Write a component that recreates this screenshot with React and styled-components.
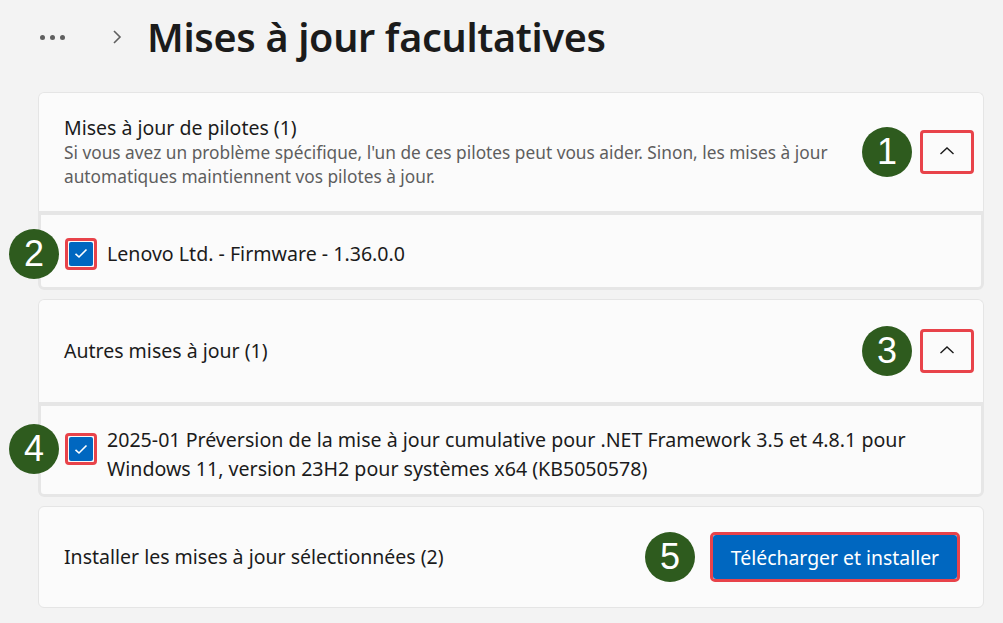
import React from "react";
import styled, { createGlobalStyle } from "styled-components";

const GlobalStyle = createGlobalStyle`
  body {
    margin: 0;
    background: #f3f3f3;
    font-family: "Segoe UI", "Noto Sans", "Open Sans", sans-serif;
    color: #1b1b1b;
  }
`;

function App() {
  return (
    <>
      <GlobalStyle />
      <Page>
        <Header>
          <Dots>
            <span />
            <span />
            <span />
          </Dots>
          <Crumb viewBox="0 0 10 16">
            <path d="M2 2 L8 8 L2 14" />
          </Crumb>
          <Title>Mises à jour facultatives</Title>
        </Header>

        <List>
          <Card>
            <CardHead>
              <HeadText>
                <HeadTitle>Mises à jour de pilotes (1)</HeadTitle>
                <HeadDesc>
                  Si vous avez un problème spécifique, l'un de ces pilotes peut vous aider. Sinon, les mises à jour
                  automatiques maintiennent vos pilotes à jour.
                </HeadDesc>
              </HeadText>
              <RightGroup>
                <Badge>1</Badge>
                <ToggleButton>
                  <Chevron />
                </ToggleButton>
              </RightGroup>
            </CardHead>
            <Content>
              <ItemRow>
                <SideBadge>2</SideBadge>
                <Check />
                <ItemText>Lenovo Ltd. - Firmware - 1.36.0.0</ItemText>
              </ItemRow>
            </Content>
          </Card>

          <Card>
            <CardHead $tall>
              <HeadText>
                <HeadTitle>Autres mises à jour (1)</HeadTitle>
              </HeadText>
              <RightGroup>
                <Badge>3</Badge>
                <ToggleButton>
                  <Chevron />
                </ToggleButton>
              </RightGroup>
            </CardHead>
            <Content $big>
              <ItemRow $multi>
                <SideBadge $multi>4</SideBadge>
                <Check multi />
                <ItemText>
                  2025-01 Préversion de la mise à jour cumulative pour .NET Framework 3.5 et 4.8.1 pour
                  <br />
                  Windows 11, version 23H2 pour systèmes x64 (KB5050578)
                </ItemText>
              </ItemRow>
            </Content>
          </Card>

          <FooterCard>
            <HeadTitle>Installer les mises à jour sélectionnées (2)</HeadTitle>
            <RightGroup $wide>
              <Badge>5</Badge>
              <PrimaryOutline>
                <PrimaryButton>Télécharger et installer</PrimaryButton>
              </PrimaryOutline>
            </RightGroup>
          </FooterCard>
        </List>
      </Page>
    </>
  );
}

function Chevron() {
  return (
    <svg width="16" height="10" viewBox="0 0 16 10">
      <path d="M1.5 8 L8 2 L14.5 8" fill="none" stroke="#1b1b1b" strokeWidth="1.4" />
    </svg>
  );
}

function Check({ multi }) {
  return (
    <CheckOutline $multi={multi}>
      <CheckBox>
        <svg width="14" height="11" viewBox="0 0 14 11">
          <path d="M1.5 5.8 L5 9 L12.5 1.5" fill="none" stroke="#fff" strokeWidth="1.6" />
        </svg>
      </CheckBox>
    </CheckOutline>
  );
}

export default App;

const Page = styled.div`
  width: 1003px;
  height: 623px;
  overflow: hidden;
`;

const Header = styled.div`
  height: 92px;
  display: flex;
  align-items: center;
  padding-left: 40px;
  box-sizing: border-box;
  padding-bottom: 18px;
`;

const Dots = styled.div`
  display: flex;
  gap: 5px;
  margin-right: 47px;
  span {
    width: 5px;
    height: 5px;
    border-radius: 50%;
    background: #5f5f5f;
  }
`;

const Crumb = styled.svg`
  width: 10px;
  height: 16px;
  margin-right: 25px;
  path {
    fill: none;
    stroke: #5f5f5f;
    stroke-width: 1.6;
  }
`;

const Title = styled.h1`
  margin: 0;
  font-size: 39.5px;
  font-weight: 600;
  letter-spacing: -0.3px;
  color: #1b1b1b;
`;

const List = styled.div`
  margin-left: 38px;
  width: 946px;
  display: flex;
  flex-direction: column;
  gap: 9px;
`;

const Card = styled.div`
  display: flex;
  flex-direction: column;
  border-radius: 6px;
  background: #fbfbfb;
`;

const CardHead = styled.div`
  display: flex;
  align-items: center;
  justify-content: space-between;
  height: ${(p) => (p.$tall ? "103px" : "119px")};
  box-sizing: border-box;
  padding: 0 9px 0 25px;
  border: 1px solid #e5e5e5;
  border-bottom: none;
  border-radius: 6px 6px 0 0;
  background: #fbfbfb;
`;

const HeadText = styled.div`
  display: flex;
  flex-direction: column;
`;

const HeadTitle = styled.div`
  font-size: 19.5px;
  line-height: 26px;
  color: #1b1b1b;
`;

const HeadDesc = styled.div`
  font-size: 17.3px;
  line-height: 24px;
  color: #5e5e5e;
  max-width: 790px;
`;

const RightGroup = styled.div`
  display: flex;
  align-items: center;
  gap: ${(p) => (p.$wide ? "15px" : "8px")};
`;

const Badge = styled.div`
  width: 50px;
  height: 50px;
  border-radius: 50%;
  background: #2e5b1e;
  color: #fff;
  font-family: "Liberation Sans", Arial, sans-serif;
  font-size: 36px;
  display: flex;
  align-items: center;
  justify-content: center;
  flex-shrink: 0;
`;

const SideBadge = styled(Badge)`
  position: absolute;
  left: -32px;
  top: ${(p) => (p.$multi ? "-1px" : "50%")};
  transform: ${(p) => (p.$multi ? "none" : "translateY(-50%)")};
`;

const ToggleButton = styled.div`
  width: 54px;
  height: 44px;
  box-sizing: border-box;
  border: 3px solid #e8434a;
  border-radius: 4px;
  display: flex;
  align-items: center;
  justify-content: center;
  padding-bottom: 2px;
`;

const Content = styled.div`
  position: relative;
  height: ${(p) => (p.$big ? "95px" : "79px")};
  box-sizing: border-box;
  border: 3px solid #e6e6e6;
  border-top-width: 4px;
  border-radius: 0 0 6px 6px;
  background: #fbfbfb;
  display: flex;
  align-items: center;
`;

const ItemRow = styled.div`
  position: relative;
  display: flex;
  align-items: ${(p) => (p.$multi ? "flex-start" : "center")};
  gap: 10px;
  padding-left: 24px;
  margin-top: ${(p) => (p.$multi ? "8px" : "5px")};
`;

const CheckOutline = styled.div`
  width: 32px;
  height: 32px;
  box-sizing: border-box;
  border: 3px solid #e8434a;
  border-radius: 4px;
  display: flex;
  align-items: center;
  justify-content: center;
  flex-shrink: 0;
  margin-top: ${(p) => (p.$multi ? "8px" : "0")};
`;

const CheckBox = styled.div`
  width: 24px;
  height: 24px;
  border-radius: 2px;
  background: #0067c0;
  display: flex;
  align-items: center;
  justify-content: center;
`;

const ItemText = styled.div`
  font-size: 19.6px;
  line-height: 29px;
  color: #1b1b1b;
`;

const FooterCard = styled.div`
  height: 102px;
  box-sizing: border-box;
  border: 1px solid #e5e5e5;
  border-radius: 6px;
  background: #fbfbfb;
  display: flex;
  align-items: center;
  justify-content: space-between;
  padding: 0 23px 0 25px;
`;

const PrimaryOutline = styled.div`
  border: 3px solid #e8434a;
  border-radius: 5px;
  display: flex;
`;

const PrimaryButton = styled.div`
  width: 244px;
  height: 44px;
  background: #0067c0;
  color: #fff;
  font-size: 19.4px;
  display: flex;
  align-items: center;
  justify-content: center;
  border-radius: 3px;
`;
